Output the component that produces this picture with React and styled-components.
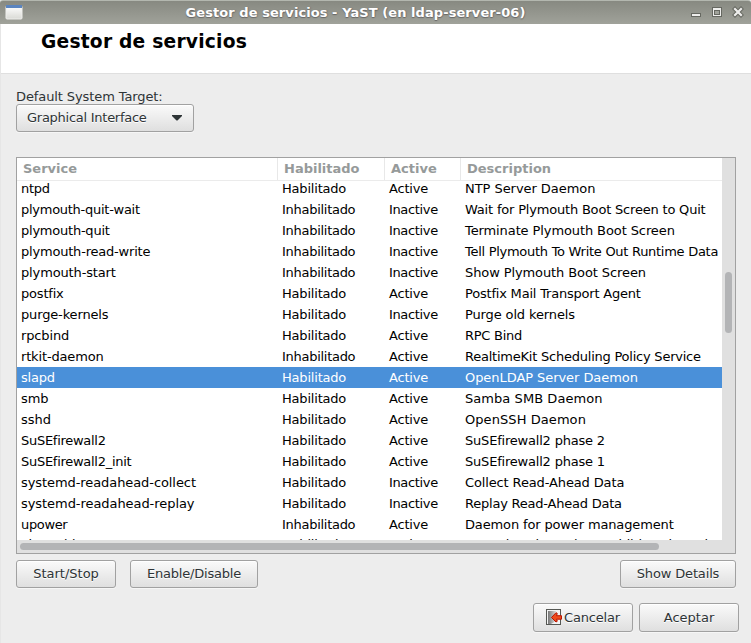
import React from 'react';
import styled, { createGlobalStyle } from 'styled-components';

const Global = createGlobalStyle`
  * { box-sizing: border-box; }
  body { margin: 0; overflow: hidden; background: #ededed; }
`;

const Window = styled.div`
  width: 751px; height: 643px; display: flex; flex-direction: column;
  background: #ededed; color: #2e3436;
  border-left: 1px solid #e6e6e6;
  font: 13px/21px "DejaVu Sans", sans-serif;
  white-space: nowrap;
`;

const TitleBar = styled.header`
  height: 24px; flex: none; margin-left: -1px;
  display: grid; grid-template-columns: 20px 1fr 60px; align-items: center;
  background: linear-gradient(#878981, #a0a29a);
  border-top: 1px solid #b3b7af;
  border-radius: 3px 3px 0 0;
`;

const AppIcon = styled.svg`
  width: 18px; height: 15px; margin-left: 5px; display: block;
`;

const WindowTitle = styled.div`
  text-align: center; color: #fff; font-weight: bold; line-height: 22px;
  letter-spacing: 0.07px;
  text-shadow: 0 1px 1px #666, 1px 0 1px #777;
`;

const WindowControls = styled.svg`
  width: 60px; height: 23px; display: block;
`;

const Heading = styled.h1`
  margin: 0; height: 50px; flex: none; padding: 4px 0 0 40px;
  background: #fff; border-bottom: 1px solid #dfdfdf; color: #000;
  font: bold 18.67px/27px "DejaVu Sans", sans-serif;
  letter-spacing: 0.22px;
`;

const Content = styled.main`
  padding: 13px 15px 0 15px; display: flex; flex-direction: column;
`;

const FieldLabel = styled.label`
  height: 17px; line-height: 20px; letter-spacing: -0.1px;
`;

const Button = styled.button`
  width: ${p => p.$width}px; height: ${p => p.$height || 28}px; padding: 0 0 1px;
  display: flex; align-items: center; justify-content: center; gap: 2px;
  border: 1px solid #a1a1a1; border-radius: 3px;
  background: linear-gradient(#fafafa, #dfdfdf);
  box-shadow: inset 0 1px #fff, 0 1px #f6f6f6;
  color: #2e3436; font: inherit; text-shadow: 0 1px #fff;
  letter-spacing: ${p => p.$spacing || 0}px;
`;

const Select = styled(Button)`
  justify-content: space-between; padding: 0 11px 1px 10px;
`;

const Table = styled.section`
  width: 720px; height: 397px; margin-top: 25px;
  border: 1px solid #a1a1a1; background: #e0e0e0;
  display: grid; grid-template: 382px 13px / 705px 13px;
`;

const Viewport = styled.div`
  background: #fff; overflow: hidden;
`;

const HeaderRow = styled.div`
  height: 23px; display: grid; grid-template-columns: 261px 107px 76px 261px;
  border-bottom: 1px solid #ebebeb;
`;

const HeaderCell = styled.div`
  padding-left: 6px; border-right: 1px solid #e8e8e8;
  color: #969a9a; font-weight: bold; line-height: 21px;
  &:last-child { border-right: 0; }
`;

const Rows = styled.div`
  height: 359px; overflow: hidden;
`;

const RowList = styled.div`
  margin-top: -3px;
  & > :last-child { margin-top: -1px; }
`;

const Row = styled.div`
  height: 21px; display: grid; grid-template-columns: 261px 107px 76px 261px;
  background: ${p => (p.$selected ? '#4a90d9' : 'transparent')};
  color: ${p => (p.$selected ? '#fff' : '#000')};
`;

const Cell = styled.span`
  padding-left: 4px; letter-spacing: ${p => p.$spacing || 0}px;
`;

const VerticalThumb = styled.div`
  width: 7px; height: 61px; margin: 114px 0 0 3px;
  border-radius: 4px; background: #b3b4b6;
`;

const HorizontalThumb = styled.div`
  width: 639px; height: 7px; margin: 3px 0 0 3px;
  border-radius: 4px; background: #b3b4b6;
`;

const Actions = styled.div`
  display: flex; gap: 14px; margin-top: 6px;
  & > :last-child { margin-left: auto; }
`;

const DialogActions = styled.footer`
  display: flex; justify-content: flex-end; gap: 6px;
  margin: 15px -3px 0 0;
`;

// name, enabled, active, description, then the tracking of name and description
const services = [
  ['ntpd', true, true, 'NTP Server Daemon', -0.25, -0.05],
  ['plymouth-quit-wait', false, false, 'Wait for Plymouth Boot Screen to Quit', -0.27, -0.19],
  ['plymouth-quit', false, false, 'Terminate Plymouth Boot Screen', -0.23, -0.1],
  ['plymouth-read-write', false, false, 'Tell Plymouth To Write Out Runtime Data', -0.2, -0.28],
  ['plymouth-start', false, false, 'Show Plymouth Boot Screen', -0.14, -0.1],
  ['postfix', true, true, 'Postfix Mail Transport Agent', -0.2, -0.2],
  ['purge-kernels', true, false, 'Purge old kernels', -0.15, -0.13],
  ['rpcbind', true, true, 'RPC Bind', -0.14, -0.25],
  ['rtkit-daemon', false, true, 'RealtimeKit Scheduling Policy Service', -0.16, -0.23],
  ['slapd', true, true, 'OpenLDAP Server Daemon', -0.2, -0.06],
  ['smb', true, true, 'Samba SMB Daemon', -0.1, 0.06],
  ['sshd', true, true, 'OpenSSH Daemon', 0, 0.07],
  ['SuSEfirewall2', true, true, 'SuSEfirewall2 phase 2', -0.28, -0.2],
  ['SuSEfirewall2_init', true, true, 'SuSEfirewall2 phase 1', -0.28, -0.2],
  ['systemd-readahead-collect', true, false, 'Collect Read-Ahead Data', -0.08, -0.13],
  ['systemd-readahead-replay', true, false, 'Replay Read-Ahead Data', -0.06, -0.22],
  ['upower', false, true, 'Daemon for power management', -0.35, -0.14],
  ['vboxadd', true, true, 'LSB: VirtualBox Linux Additions kernel modules', -0.2, -0.12],
];

const DropArrow = () => (
  <svg width="10" height="6" viewBox="0 0 10 6"><path d="M0 0H10V1L5.5 5.5H4.5L0 1Z" fill="#2e3436" /></svg>
);

const ExitIcon = () => (
  <svg width="16" height="17" viewBox="0 0 16 17">
    <defs>
      <linearGradient id="door"><stop stopColor="#777" /><stop offset="1" stopColor="#ddd" /></linearGradient>
    </defs>
    <rect x=".5" y=".5" width="14" height="15" fill="#f4f4f4" stroke="#555753" />
    <path d="M2 2H10V12L5 15H2Z" fill="url(#door)" />
    <path d="M5.5 8.5L10 3.7L11.3 4.5L10.5 6.7H15.5V10.2H10.5L11.3 12.2L10 13Z" fill="#ef4a1c" stroke="#b81400" />
  </svg>
);

export default function App() {
  return (
    <Window>
      <Global />
      <TitleBar>
        <AppIcon viewBox="0 0 18 15">
          <defs><linearGradient id="app" x2="0" y2="1"><stop stopColor="#fff" /><stop offset="1" stopColor="#d9dad5" /></linearGradient></defs>
          <rect x="1" y="1" width="16" height="13" rx="1" fill="url(#app)" stroke="#eeeeec" />
          <path d="M1 1.5H17" stroke="#5b85c0" strokeWidth="3" />
        </AppIcon>
        <WindowTitle>Gestor de servicios - YaST (en ldap-server-06)</WindowTitle>
        <WindowControls viewBox="0 0 60 23">
          <rect x=".5" y="12.5" width="9" height="3" fill="#eeeeec" stroke="#666861" />
          <rect x="21.5" y="6.5" width="9" height="9" fill="#eeeeec" stroke="#666861" />
          <rect x="23.5" y="9.5" width="5" height="4" fill="#a0a29a" stroke="#666861" />
          <path d="M44 8L50 14M50 8L44 14" stroke="#666861" strokeWidth="4.2" strokeLinecap="square" />
          <path d="M44 8L50 14M50 8L44 14" stroke="#eeeeec" strokeWidth="2.2" strokeLinecap="square" />
        </WindowControls>
      </TitleBar>
      <Heading>Gestor de servicios</Heading>
      <Content>
        <FieldLabel>Default System Target:</FieldLabel>
        <Select $width={178} $spacing={-0.26}>Graphical Interface<DropArrow /></Select>
        <Table>
          <Viewport>
            <HeaderRow>
              <HeaderCell>Service</HeaderCell>
              <HeaderCell>Habilitado</HeaderCell>
              <HeaderCell>Active</HeaderCell>
              <HeaderCell>Description</HeaderCell>
            </HeaderRow>
            <Rows>
              <RowList>
                {services.map(([name, enabled, active, description, nameSpacing, descriptionSpacing]) => (
                  <Row key={name} $selected={name === 'slapd'}>
                    <Cell $spacing={nameSpacing}>{name}</Cell>
                    <Cell $spacing={enabled ? -0.2 : -0.28}>{enabled ? 'Habilitado' : 'Inhabilitado'}</Cell>
                    <Cell $spacing={active ? -0.2 : -0.35}>{active ? 'Active' : 'Inactive'}</Cell>
                    <Cell $spacing={descriptionSpacing}>{description}</Cell>
                  </Row>
                ))}
              </RowList>
            </Rows>
          </Viewport>
          <VerticalThumb />
          <HorizontalThumb />
        </Table>
        <Actions>
          <Button $width={100}>Start/Stop</Button>
          <Button $width={128} $spacing={-0.2}>Enable/Disable</Button>
          <Button $width={116} $spacing={-0.15}>Show Details</Button>
        </Actions>
        <DialogActions>
          <Button $width={100} $height={29} $spacing={-0.2}><ExitIcon />Cancelar</Button>
          <Button $width={100} $height={29}>Aceptar</Button>
        </DialogActions>
      </Content>
    </Window>
  );
}
